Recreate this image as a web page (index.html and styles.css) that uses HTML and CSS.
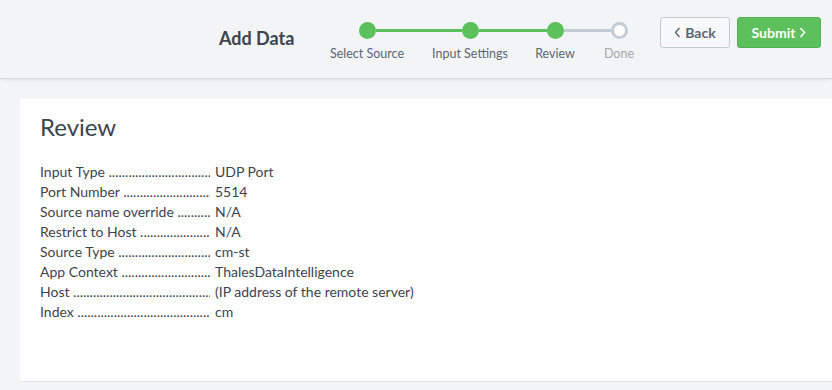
FILE: index.html
```html
<!DOCTYPE html>
<html>
<head>
<meta charset="utf-8">
<link rel="stylesheet" href="styles.css">
</head>
<body>
<header class="topbar">
  <h1 class="title">Add Data</h1>
  <div class="steps">
    <div class="step done">
      <div class="track"><span class="seg left hidden"></span><span class="dot"></span><span class="seg right green"></span></div>
      <div class="label">Select Source</div>
    </div>
    <div class="step done">
      <div class="track"><span class="seg left green"></span><span class="dot"></span><span class="seg right green"></span></div>
      <div class="label">Input Settings</div>
    </div>
    <div class="step done">
      <div class="track"><span class="seg left green"></span><span class="dot"></span><span class="seg right grey"></span></div>
      <div class="label">Review</div>
    </div>
    <div class="step todo">
      <div class="track"><span class="seg left grey"></span><span class="dot"></span><span class="seg right hidden"></span></div>
      <div class="label">Done</div>
    </div>
  </div>
  <div class="actions">
    <button class="btn back"><svg width="7" height="11" viewBox="0 0 7 11"><path d="M5.5 1 L1.5 5.5 L5.5 10" fill="none" stroke="currentColor" stroke-width="1.4"/></svg>Back</button>
    <button class="btn submit">Submit<svg width="7" height="11" viewBox="0 0 7 11"><path d="M1.5 1 L5.5 5.5 L1.5 10" fill="none" stroke="currentColor" stroke-width="1.6"/></svg></button>
  </div>
</header>
<main class="content">
  <section class="card">
    <h2 class="card-title">Review</h2>
    <dl class="list">
      <div class="row"><dt>Input Type</dt><dd>UDP Port</dd></div>
      <div class="row"><dt>Port Number</dt><dd>5514</dd></div>
      <div class="row"><dt>Source name override</dt><dd>N/A</dd></div>
      <div class="row"><dt>Restrict to Host</dt><dd>N/A</dd></div>
      <div class="row"><dt>Source Type</dt><dd>cm-st</dd></div>
      <div class="row"><dt>App Context</dt><dd>ThalesDataIntelligence</dd></div>
      <div class="row"><dt>Host</dt><dd>(IP address of the remote server)</dd></div>
      <div class="row"><dt>Index</dt><dd>cm</dd></div>
    </dl>
  </section>
</main>
</body>
</html>
```
FILE: styles.css
```css
* { box-sizing: border-box; }
html, body { margin: 0; padding: 0; }
body {
  background: #f2f4f5;
  font-family: "Lato", "Open Sans", sans-serif;
  color: #3c444d;
  width: 832px;
  height: 390px;
  overflow: hidden;
}
.topbar {
  height: 79px;
  display: flex;
  align-items: flex-start;
  border-bottom: 1px solid #d5d9dd;
  box-shadow: 0 1px 3px rgba(0,0,0,0.08);
  background: #f2f4f5;
}
.title {
  margin: 27px 0 0 219px;
  font-size: 18px;
  line-height: 22px;
  font-weight: 700;
  color: #3c444d;
  width: 110px;
}
.steps {
  display: flex;
  margin-top: 22px;
  margin-left: -1px;
}
.step {
  display: flex;
  flex-direction: column;
  align-items: center;
}
.step:nth-child(1) { width: 82px; }
.step:nth-child(2) { width: 124px; }
.step:nth-child(3) { width: 46px; }
.step:nth-child(4) { width: 82px; }
.track {
  display: flex;
  align-items: center;
  width: 100%;
  height: 17px;
}
.seg { flex: 1; height: 3px; }
.seg.green { background: #5cc05c; }
.seg.grey { background: #c3cbd4; }
.seg.hidden { background: transparent; }
.dot {
  width: 17px;
  height: 17px;
  border-radius: 50%;
  background: #5cc05c;
  flex: none;
}
.todo .dot {
  background: #fff;
  border: 3px solid #c3cbd4;
}
.label {
  margin-top: 7px;
  font-size: 12.5px;
  color: #5c6773;
  white-space: nowrap;
}
.todo .label { color: #a0a7ae; }
.actions {
  display: flex;
  gap: 7px;
  margin-top: 17px;
  margin-left: auto;
  margin-right: 11px;
}
.btn {
  height: 31px;
  border-radius: 3px;
  font-family: inherit;
  font-size: 14px;
  font-weight: 700;
  display: flex;
  align-items: center;
  justify-content: center;
  gap: 4px;
  padding: 0;
  cursor: pointer;
}
.btn.back {
  width: 70px;
  background: #f7f8fa;
  border: 1px solid #c3cbd4;
  color: #5c6773;
}
.btn.submit {
  width: 84px;
  background: #5cc05c;
  border: 1px solid #53b153;
  color: #fff;
}
.content {
  padding: 20px 0 0 20px;
}
.card {
  background: #fff;
  height: 283px;
  padding: 13px 20px;
  border-bottom: 1px solid #e1e6eb;
}
.card-title {
  margin: 0 0 19px;
  font-size: 24px;
  font-weight: 400;
  color: #3c444d;
  line-height: 30px;
}
.list { margin: 0; }
.row {
  display: flex;
  height: 20px;
  align-items: center;
  font-size: 14px;
  color: #3c444d;
}
.row dt {
  width: 170px;
  overflow: hidden;
  white-space: nowrap;
  margin-right: 5px;
}
.row dt::after {
  content: " ..................................................................................................";
  letter-spacing: 0;
}
.row dd { margin: 0; white-space: nowrap; }
```
